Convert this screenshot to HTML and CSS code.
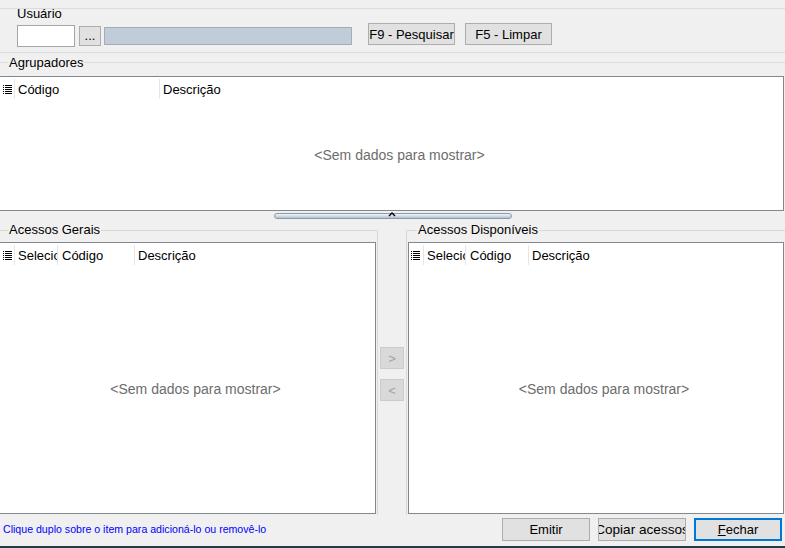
FILE: index.html
```html
<!DOCTYPE html>
<html>
<head>
    <meta charset="UTF-8">
    <title>Acessos</title>
    <link rel="stylesheet" href="styles.css">
</head>
<body>
<div class="win">

    <!-- usuario -->
    <div class="usr">
        <div class="usr-lbl">Usuário</div>
        <div class="usr-row">
            <span class="inp"></span>
            <span class="btn-dots">...</span>
            <span class="bar"></span>
            <span class="btn btn-f9">F9 - Pesquisar</span>
            <span class="btn btn-f5">F5 - Limpar</span>
        </div>
    </div>

    <!-- agrupadores -->
    <div class="agr">
        <div class="agr-title"><span>Agrupadores</span></div>
        <div class="grid grid-agr">
            <div class="ghead">
                <div class="gc gc-ic"><svg width="9" height="9" viewBox="0 0 9 9"><g fill="#000"><rect x="0" y="0" width="1" height="1"/><rect x="2" y="0" width="7" height="1"/><rect x="0" y="2" width="1" height="1"/><rect x="2" y="2" width="7" height="1"/><rect x="0" y="4" width="1" height="1"/><rect x="2" y="4" width="7" height="1"/><rect x="0" y="6" width="1" height="1"/><rect x="2" y="6" width="7" height="1"/><rect x="0" y="8" width="1" height="1"/><rect x="2" y="8" width="7" height="1"/></g></svg></div>
                <div class="gc gc-cod1">Código</div>
                <div class="gc gc-last">Descrição</div>
            </div>
            <div class="empty">&lt;Sem dados para mostrar&gt;</div>
        </div>
    </div>

    <!-- splitter -->
    <div class="split">
        <div class="split-grip"><svg width="8" height="5" viewBox="0 0 8 5"><path d="M1 4 L4 1 L7 4" fill="none" stroke="#000" stroke-width="1.4"/></svg></div>
    </div>

    <!-- acessos -->
    <div class="lower">
        <div class="lcol">
            <div class="gb gb-l">
                <div class="gb-title"><span>Acessos Gerais</span></div>
                <div class="grid grid-l">
                    <div class="ghead">
                        <div class="gc gc-ic"><svg width="9" height="9" viewBox="0 0 9 9"><g fill="#000"><rect x="0" y="0" width="1" height="1"/><rect x="2" y="0" width="7" height="1"/><rect x="0" y="2" width="1" height="1"/><rect x="2" y="2" width="7" height="1"/><rect x="0" y="4" width="1" height="1"/><rect x="2" y="4" width="7" height="1"/><rect x="0" y="6" width="1" height="1"/><rect x="2" y="6" width="7" height="1"/><rect x="0" y="8" width="1" height="1"/><rect x="2" y="8" width="7" height="1"/></g></svg></div>
                        <div class="gc gc-sel">Selecio</div>
                        <div class="gc gc-cod">Código</div>
                        <div class="gc gc-last">Descrição</div>
                    </div>
                    <div class="empty">&lt;Sem dados para mostrar&gt;</div>
                </div>
            </div>
        </div>

        <div class="mcol">
            <span class="mv">&gt;</span>
            <span class="mv">&lt;</span>
        </div>

        <div class="rcol">
            <div class="gb gb-r">
                <div class="gb-title"><span>Acessos Disponíveis</span></div>
                <div class="grid grid-r">
                    <div class="ghead">
                        <div class="gc gc-ic"><svg width="9" height="9" viewBox="0 0 9 9"><g fill="#000"><rect x="0" y="0" width="1" height="1"/><rect x="2" y="0" width="7" height="1"/><rect x="0" y="2" width="1" height="1"/><rect x="2" y="2" width="7" height="1"/><rect x="0" y="4" width="1" height="1"/><rect x="2" y="4" width="7" height="1"/><rect x="0" y="6" width="1" height="1"/><rect x="2" y="6" width="7" height="1"/><rect x="0" y="8" width="1" height="1"/><rect x="2" y="8" width="7" height="1"/></g></svg></div>
                        <div class="gc gc-sel">Selecio</div>
                        <div class="gc gc-cod">Código</div>
                        <div class="gc gc-last">Descrição</div>
                    </div>
                    <div class="empty">&lt;Sem dados para mostrar&gt;</div>
                </div>
            </div>
        </div>
    </div>

    <!-- rodape -->
    <div class="foot">
        <div class="hint">Clique duplo sobre o item para adicioná-lo ou removê-lo</div>
        <span class="btn fbtn fbtn-first">Emitir</span>
        <span class="btn fbtn fbtn-copy">Copiar acessos</span>
        <span class="btn fbtn fbtn-def"><u>F</u>echar</span>
    </div>
    <div class="edge"></div>
</div>
</body>
</html>
```
FILE: styles.css
```css
body{margin:0;background:#f0f0f0;font-family:"Liberation Sans",Arial,sans-serif;font-size:13px;color:#000;}
.win{width:785px;height:548px;overflow:hidden;display:flex;flex-direction:column;}

/* usuario */
.usr{height:53px;box-sizing:border-box;border-bottom:1px solid #dadada;padding:6px 0 0 17px;
    background:linear-gradient(#dcdcdc,#dcdcdc) no-repeat 0 8px/100% 1px;}
.usr-lbl{line-height:16px;width:50px;height:13px;}
.usr-row{display:flex;align-items:flex-start;margin-top:4px;}
.inp{width:58px;height:22px;box-sizing:border-box;background:#fff;border:1px solid #a5a5a5;margin-top:2px;}
.btn-dots{width:22px;height:20px;box-sizing:border-box;margin:3px 0 0 4px;background:#e1e1e1;border:1px solid #adadad;
    display:flex;justify-content:center;align-items:center;line-height:14px;}
.bar{width:248px;height:18px;box-sizing:border-box;margin:4px 0 0 3px;background:#c0cdd8;border:1px solid #a6adb4;}
.btn{height:22px;box-sizing:border-box;background:#e1e1e1;border:1px solid #adadad;display:flex;justify-content:center;
    align-items:center;white-space:nowrap;overflow:hidden;}
.btn-f9{width:87px;margin-left:16px;}
.btn-f5{width:87px;margin-left:10px;}

/* agrupadores */
.agr{height:158px;display:flex;flex-direction:column;}
.agr-title{height:23px;box-sizing:border-box;padding:2px 0 0 8px;line-height:16px;
    background:linear-gradient(#dcdcdc,#dcdcdc) no-repeat 0 9px/100% 1px;}
.agr-title span,.gb-title span{background:#f0f0f0;padding:0 1px;}

.grid{background:#fff;border:1px solid #828790;display:flex;flex-direction:column;}
.grid-agr{flex:1;border-left:none;margin-right:1px;}
.ghead{height:22px;display:flex;align-items:center;flex:none;padding-top:2px;box-sizing:border-box;}
.gc{height:20px;box-sizing:border-box;display:flex;align-items:center;padding-left:3px;border-right:1px solid #e6e6e6;
    white-space:nowrap;overflow:hidden;flex:none;}
.gc-ic{width:15px;padding-left:3px;}
.gc-last{border-right:none;flex:1;}
.gc-cod1{width:145px;}
.empty{flex:1;display:flex;justify-content:center;align-items:center;color:#6d6d6d;font-size:14px;padding-left:16px;}

/* splitter */
.split{height:10px;display:flex;align-items:flex-start;flex:none;}
.split-grip{width:238px;height:6px;box-sizing:border-box;margin:2px 0 0 274px;border:1px solid #8b9aa8;border-radius:3px;
    background:linear-gradient(#f2f5f8,#b2c3d1);display:flex;justify-content:center;align-items:flex-start;}
.split-grip svg{margin-top:-2px;margin-left:-3px;}

/* acessos */
.lower{height:294px;display:flex;flex:none;}
.lcol{width:378px;padding-top:9px;box-sizing:border-box;}
.rcol{width:379px;padding-top:9px;box-sizing:border-box;}
.gb{height:100%;box-sizing:border-box;border-top:1px solid #d9d9d9;display:flex;flex-direction:column;padding-bottom:1px;}
.gb-l{border-right:1px solid #d9d9d9;}
.gb-r{border-left:1px solid #d9d9d9;}
.gb-title{margin-top:-9px;height:16px;line-height:16px;margin-bottom:4px;padding-left:8px;}
.gb-r .gb-title{padding-left:10px;}
.grid-l{flex:1;border-left:none;margin-right:1px;}
.grid-r{flex:1;margin-left:1px;width:376px;box-sizing:border-box;}
.gc-sel{width:43px;padding-left:3px;}
.grid-l .gc-cod{width:77px;padding-left:4px;}
.grid-r .gc-ic{padding-left:2px;}
.grid-r .gc-sel{width:42px;}
.grid-r .gc-cod{width:63px;padding-left:4px;}

.mcol{width:28px;padding-top:126px;box-sizing:border-box;display:flex;flex-direction:column;align-items:flex-start;gap:10px;}
.mv{width:24px;height:22px;margin-left:2px;box-sizing:border-box;background:#d9d9d9;border:1px solid #cbcbcb;
    display:flex;justify-content:center;align-items:center;color:#9aa3ad;font-size:13px;}

/* rodape */
.foot{height:31px;display:flex;align-items:flex-start;padding:3px 3px 0 3px;box-sizing:border-box;flex:none;}
.hint{color:#0000ff;font-size:10.6px;margin-top:5px;white-space:nowrap;}
.fbtn{width:88px;height:23px;margin-left:8px;}
.fbtn-first{margin-left:auto;}
.fbtn-copy{font-size:13.6px;}
.fbtn-def{border:2px solid #0078d7;}
.edge{height:2px;background:#203e4a;flex:none;}
```
